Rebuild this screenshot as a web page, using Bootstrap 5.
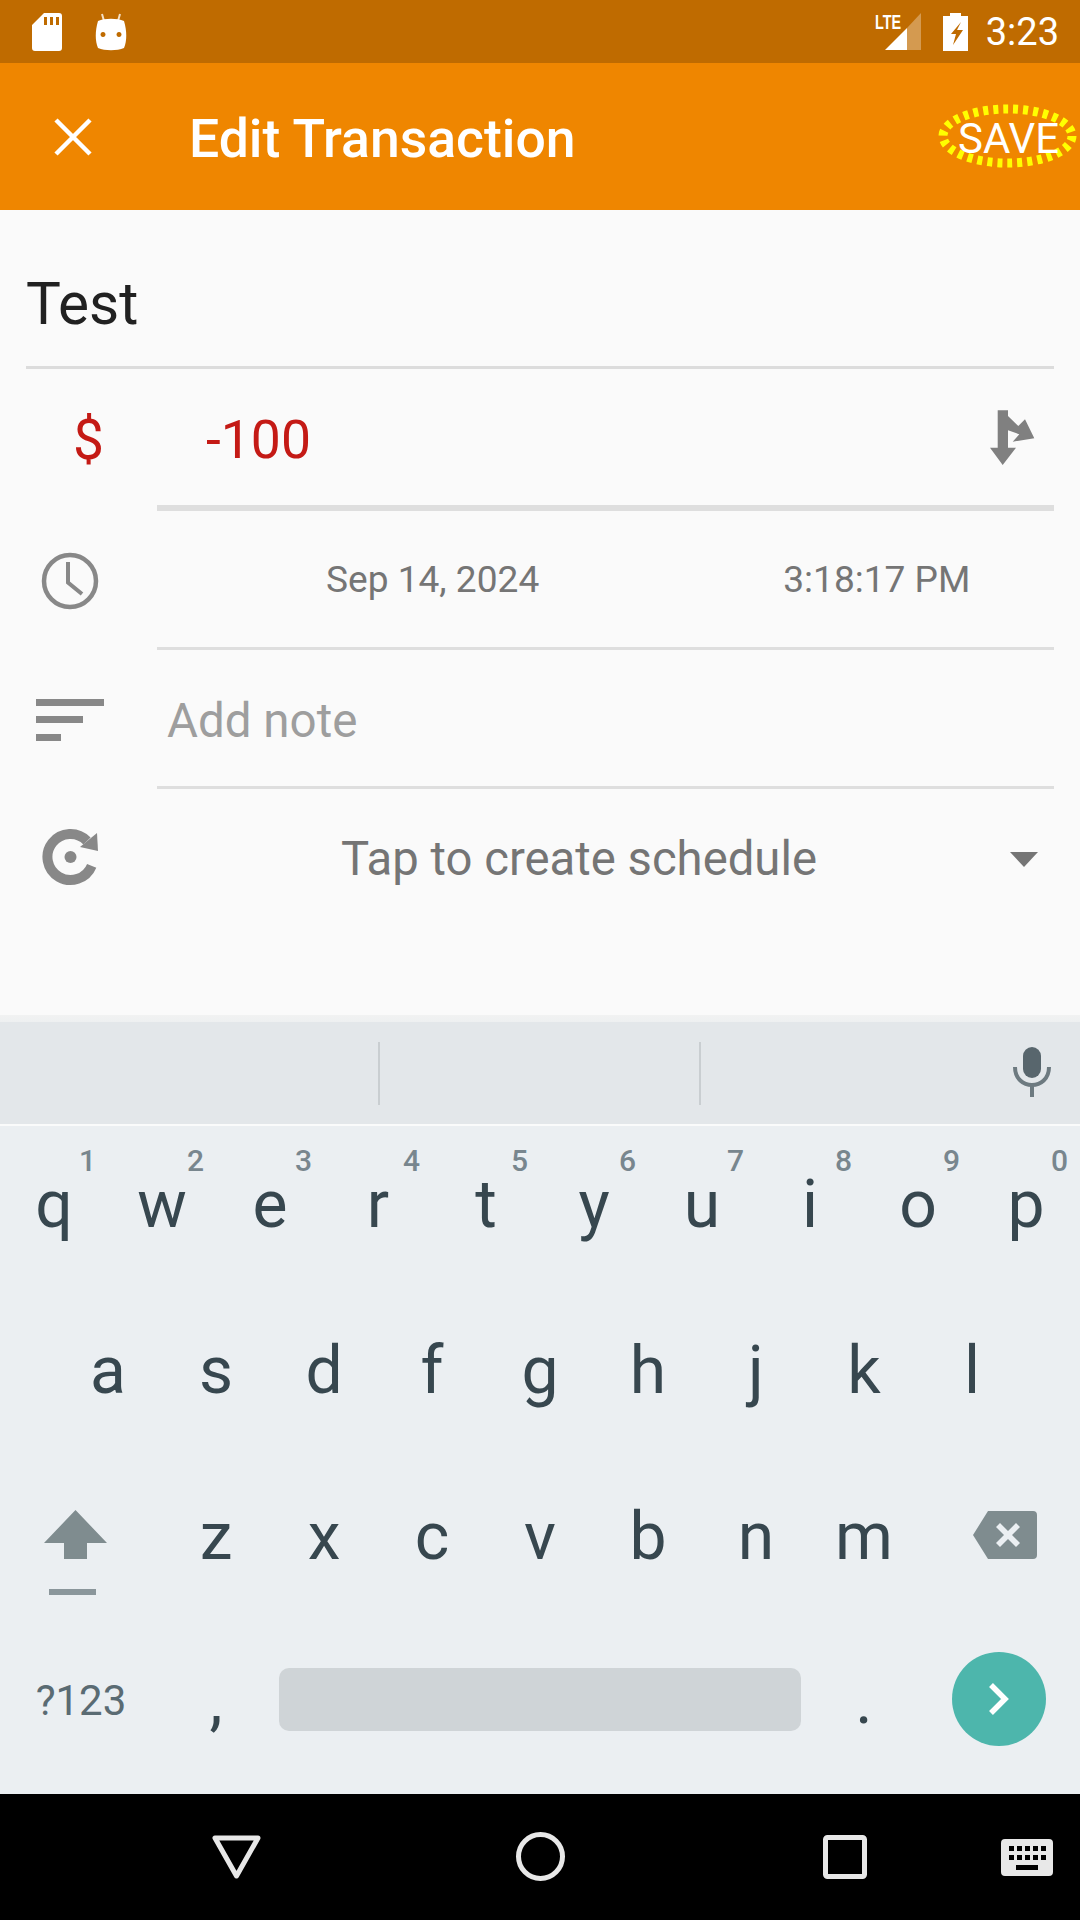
<!DOCTYPE html>
<html lang="en">
<head>
<meta charset="UTF-8">
<meta name="viewport" content="width=device-width, initial-scale=1.0">
<title>Edit Transaction</title>
<link href="https://cdn.jsdelivr.net/npm/bootstrap@5.3.0/dist/css/bootstrap.min.css" rel="stylesheet">
<style>
  body { font-family: Roboto, "Liberation Sans", sans-serif; background: #fafafa; overflow: hidden; }
  .screen { width: 1080px; height: 1920px; }
  .status-strip { height: 63px; background: #bf6b00; padding-left: 32px; padding-right: 21px; }
  .status-droid { margin-left: 33px; }
  .signal-box { position: relative; width: 46px; height: 38px; }
  .signal-lte { position: absolute; left: -1px; top: -1px; font-family: "Liberation Sans", sans-serif; font-size: 20px; font-weight: 700; line-height: 20px; color: #fff; transform: scaleX(.72); transform-origin: left; }
  .signal-bars { position: absolute; left: 9px; top: 0; }
  .status-batt { margin-left: 21px; }
  .status-time { font-size: 38px; color: #fff; line-height: 1; margin-left: 17px; }
  .app-bar { height: 147px; background: #ef8600; position: relative; color: #fff; }
  .close-btn { width: 190px; padding-left: 54px; }
  .app-title { font-size: 53.5px; font-weight: 500; line-height: 1; padding-top: 4px; margin-left: -1px; }
  .save-label { position: absolute; left: 958px; top: 55px; font-size: 42px; line-height: 1; }
  .save-ring { position: absolute; left: 936px; top: 39px; }
  .form-area { background: #fafafa; }
  .name-row { height: 159px; padding: 0 26px 0 27px; }
  .name-text { font-size: 58.5px; line-height: 1; color: #212121; height: 159px; padding-top: 65px; border-bottom: 3px solid #dcdcdc; margin-left: -1px; }
  .icon-cell { width: 157px; flex: none; }
  .clock-cell { padding-left: 41px; }
  .sort-cell { padding-left: 36px; }
  .repeat-cell { padding-left: 41px; padding-bottom: 6px; }
  .row-body { margin-right: 26px; border-bottom: 3px solid #dedede; }
  .amount-row { height: 142px; }
  .amount-body { border-bottom-width: 6px; padding-left: 49px; padding-right: 18px; }
  .amount-sign { font-size: 55px; color: #c41a15; padding-left: 73px; line-height: 1; }
  .amount-text { font-size: 53.5px; color: #c41a15; line-height: 1; padding-top: 5px; }
  .date-row, .note-row { height: 139px; }
  .date-text { font-size: 37.1px; color: #757575; line-height: 1; padding-top: 2px; }
  .date-day { margin-left: 169px; }
  .date-hour { margin-left: 244px; }
  .note-text { font-size: 47.5px; color: #9e9e9e; padding-left: 10px; line-height: 1; padding-top: 7px; }
  .sched-row { height: 141px; }
  .sched-text { font-size: 47.25px; color: #757575; line-height: 1; margin-left: 184px; }
  .drop-caret { width: 0; height: 0; border-left: 14px solid transparent; border-right: 14px solid transparent; border-top: 15px solid #757575; margin-left: 193px; }
  .form-rest { height: 85px; }
  .kb-shadow { height: 7px; background: linear-gradient(#f1f2f2, #eef0f1); }
  .suggest-strip { height: 102px; background: #e3e7ea; position: relative; }
  .suggest-sep { width: 2px; height: 63px; background: #c9ced1; }
  .sep-one { margin-left: 378px; }
  .sep-two { margin-left: 319px; }
  .suggest-mic { position: absolute; left: 1013px; top: 25px; }
  .kb-gap { height: 2px; background: #fafbfb; }
  .keyboard { height: 668px; background: #ebeff2; color: #37474f; }
  .key-line { height: 166px; }
  .key-bottom { height: 170px; padding-bottom: 20px; }
  .key-cell { width: 108px; flex: none; position: relative; height: 100%; font-size: 66px; line-height: 1; padding-bottom: 8px; }
  .key-bottom .key-cell { padding-top: 4px; padding-bottom: 0; }
  .key-hint { position: absolute; right: 12px; top: 20px; font-size: 30px; font-weight: 500; color: #78868e; line-height: 1; }
  .key-wide { width: 162px; flex: none; }
  .shift-key { padding-right: 12px; padding-top: 22px; }
  .back-key { padding-left: 11px; padding-bottom: 12px; }
  .sym-key { font-size: 42px; color: #5a6b73; line-height: 1; padding-top: 4px; }
  .space-key { width: 522px; height: 63px; background: #cfd4d7; border-radius: 10px; margin: 0 9px; }
  .enter-key { width: 94px; height: 94px; border-radius: 50%; background: #4db6ac; }
  .nav-strip { height: 126px; background: #000; position: relative; }
  .nav-icon { position: absolute; }
  .nav-back { left: 212px; top: 41px; }
  .nav-home { left: 516px; top: 38px; }
  .nav-recent { left: 823px; top: 41px; }
  .nav-keys { left: 1001px; top: 45px; }
</style>
</head>
<body>
<div class="screen d-flex flex-column">

  <!-- status bar -->
  <div class="status-strip d-flex align-items-center flex-shrink-0">
    <svg width="30" height="38" viewBox="0 0 30 38"><path fill="#fff" fill-rule="evenodd" d="M12 0H27a3 3 0 0 1 3 3V35a3 3 0 0 1-3 3H3a3 3 0 0 1-3-3V12ZM12 4V12H15V4ZM18 4V12H21V4ZM24 4V12H27V4Z"/></svg>
    <svg class="status-droid" width="32" height="38" viewBox="0 0 32 38">
      <path stroke="#f3dfc4" stroke-width="2" d="M7 1l2 7M25 1l-2 7"/>
      <path fill="#fff" fill-rule="evenodd" d="M3 8C10 5 22 5 29 8C32 18 32 28 29 35C22 38 10 38 3 35C0 28 0 18 3 8ZM8 19a2.500 2.500 0 1 0 .01 0ZM24 19a2.500 2.500 0 1 0 .01 0Z"/>
    </svg>
    <div class="flex-grow-1"></div>
    <div class="signal-box">
      <svg class="signal-bars" width="37" height="37" viewBox="0 0 37 37"><path fill="#d49a50" d="M36 0V37H22V15Z"/><path fill="#fff" d="M22 15V37H0Z"/></svg>
      <span class="signal-lte">LTE</span>
    </div>
    <svg class="status-batt" width="26" height="38" viewBox="0 0 26 38"><path fill="#fff" fill-rule="evenodd" d="M7 0H18V3H25V38H0V3H7ZM18 9L8 21H13L10 32L20 17H14Z"/></svg>
    <span class="status-time">3:23</span>
  </div>

  <!-- toolbar -->
  <div class="app-bar d-flex align-items-center flex-shrink-0">
    <div class="close-btn d-flex align-items-center">
      <svg width="38" height="38" viewBox="0 0 38 38"><path stroke="#fff" stroke-width="4.5" d="M2 2L36 36M36 2L2 36"/></svg>
    </div>
    <span class="app-title">Edit Transaction</span>
    <svg class="save-ring" width="144" height="68" viewBox="0 0 144 68"><ellipse cx="71.500" cy="34" rx="64.500" ry="27" fill="none" stroke="#ff0" stroke-width="9" stroke-dasharray="5 5"/></svg>
    <span class="save-label">SAVE</span>
  </div>

  <!-- form -->
  <div class="form-area flex-shrink-0">
    <div class="name-row"><div class="name-text">Test</div></div>

    <div class="amount-row d-flex">
      <div class="icon-cell d-flex align-items-center"><span class="amount-sign">$</span></div>
      <div class="row-body amount-body flex-grow-1 d-flex align-items-center justify-content-between">
        <span class="amount-text">-100</span>
        <svg width="48" height="60" viewBox="988 406 48 60"><path fill="#808080" d="M997.700 409.300H1008V415L1018.300 425 1025 418.300 1034.300 437.300 1012.700 440.700 1019.300 433.300 1008 429.300V446.700H1016L1002.700 464 990 446.700H997.700Z"/></svg>
      </div>
    </div>

    <div class="date-row d-flex">
      <div class="icon-cell clock-cell d-flex align-items-center">
        <svg width="58" height="58" viewBox="0 0 58 58"><circle cx="29" cy="29" r="26" fill="none" stroke="#888" stroke-width="4.500"/><path fill="none" stroke="#888" stroke-width="4" d="M27 10V30.500L41 42"/></svg>
      </div>
      <div class="row-body flex-grow-1 d-flex align-items-center">
        <span class="date-text date-day">Sep 14, 2024</span>
        <span class="date-text date-hour">3:18:17 PM</span>
      </div>
    </div>

    <div class="note-row d-flex">
      <div class="icon-cell sort-cell d-flex align-items-center">
        <svg width="68" height="42" viewBox="0 0 68 42"><path fill="#888" d="M0 0H68V7H0ZM0 17H47V24H0ZM0 35H25V42H0Z"/></svg>
      </div>
      <div class="row-body flex-grow-1 d-flex align-items-center"><span class="note-text">Add note</span></div>
    </div>

    <div class="sched-row d-flex">
      <div class="icon-cell repeat-cell d-flex align-items-center">
        <svg width="58" height="58" viewBox="0 0 58 58"><path fill="none" stroke="#888" stroke-width="10" d="M50.700 37.800A23 23 0 1 1 46 13"/><path fill="#888" d="M56 5L57 23 39 19Z"/><circle cx="29.500" cy="29" r="6" fill="#888"/></svg>
      </div>
      <div class="flex-grow-1 d-flex align-items-center"><span class="sched-text">Tap to create schedule</span><span class="drop-caret"></span></div>
    </div>

    <div class="form-rest"></div>
  </div>

  <!-- keyboard -->
  <div class="kb-shadow flex-shrink-0"></div>
  <div class="suggest-strip d-flex align-items-center flex-shrink-0">
    <span class="suggest-sep sep-one"></span>
    <span class="suggest-sep sep-two"></span>
    <svg class="suggest-mic" width="38" height="50" viewBox="0 0 38 50"><rect x="10" y="0" width="18" height="31" rx="9" fill="#58666d"/><path fill="none" stroke="#6d7a80" stroke-width="4" d="M2 20C2 44 36 44 36 20"/><path stroke="#6d7a80" stroke-width="4" d="M19 36V50"/></svg>
  </div>
  <div class="kb-gap flex-shrink-0"></div>

  <div class="keyboard flex-shrink-0">
    <div class="key-line d-flex" id="rowOne"></div>
    <div class="key-line d-flex justify-content-center" id="rowTwo"></div>
    <div class="key-line d-flex align-items-center">
      <div class="key-wide shift-key d-flex justify-content-center">
        <svg width="63" height="85" viewBox="0 0 63 85"><path fill="#7f8c8f" d="M31.500 0L63 33H43V49H20V33H0Z"/><path fill="#8a969b" d="M5 79H52V85H5Z"/></svg>
      </div>
      <div class="d-flex h-100" id="rowThree"></div>
      <div class="key-wide back-key d-flex justify-content-center">
        <svg width="64" height="48" viewBox="0 0 64 48"><path fill="#7f8c8f" fill-rule="evenodd" d="M15 0H60a4 4 0 0 1 4 4V44a4 4 0 0 1-4 4H15L0 24ZM27 12L23 16 31 24 23 32 27 36 35 28 43 36 47 32 39 24 47 16 43 12 35 20Z"/></svg>
      </div>
    </div>
    <div class="key-line key-bottom d-flex align-items-center">
      <div class="key-wide d-flex justify-content-center"><span class="sym-key">?123</span></div>
      <div class="key-cell d-flex justify-content-center align-items-center"><span>,</span></div>
      <div class="space-key"></div>
      <div class="key-cell d-flex justify-content-center align-items-center"><span>.</span></div>
      <div class="key-wide d-flex justify-content-center align-items-center">
        <div class="enter-key d-flex justify-content-center align-items-center">
          <svg width="22" height="34" viewBox="0 0 22 34"><path fill="none" stroke="#fff" stroke-width="5.500" d="M3 3L17 17 3 31"/></svg>
        </div>
      </div>
    </div>
  </div>

  <!-- nav bar -->
  <div class="nav-strip flex-shrink-0">
    <svg class="nav-icon nav-back" width="49" height="44" viewBox="0 0 49 44"><path fill="none" stroke="#e8e8e8" stroke-width="5" stroke-linejoin="round" d="M3 3H46L24.500 41Z"/></svg>
    <svg class="nav-icon nav-home" width="49" height="49" viewBox="0 0 49 49"><circle cx="24.500" cy="24.500" r="22" fill="none" stroke="#e8e8e8" stroke-width="5"/></svg>
    <svg class="nav-icon nav-recent" width="44" height="44" viewBox="0 0 44 44"><rect x="2.500" y="2.500" width="39" height="39" rx="2" fill="none" stroke="#e8e8e8" stroke-width="5"/></svg>
    <svg class="nav-icon nav-keys" width="52" height="37" viewBox="0 0 52 37"><path fill="#e8e8e8" fill-rule="evenodd" d="M4 0H48a4 4 0 0 1 4 4V33a4 4 0 0 1-4 4H4a4 4 0 0 1-4-4V4a4 4 0 0 1 4-4ZM8 7V12H13V7ZM16 7V12H21V7ZM24 7V12H29V7ZM32 7V12H37V7ZM40 7V12H45V7ZM8 16V21H13V16ZM16 16V21H21V16ZM24 16V21H29V16ZM32 16V21H37V16ZM40 16V21H45V16ZM15 26V31H37V26Z"/></svg>
  </div>
</div>

<script>
  // letter rows are generated, the three rows only differ by their letters
  function fillRow(id, letters, hints) {
    let row = document.getElementById(id);
    letters.split("").forEach((ch, i) => {
      let hint = hints ? `<span class="key-hint">${hints[i]}</span>` : "";
      row.innerHTML += `<div class="key-cell d-flex justify-content-center align-items-center"><span>${ch}</span>${hint}</div>`;
    });
  }
  fillRow("rowOne", "qwertyuiop", "1234567890");
  fillRow("rowTwo", "asdfghjkl");
  fillRow("rowThree", "zxcvbnm");
</script>
<script src="https://cdn.jsdelivr.net/npm/bootstrap@5.3.0/dist/js/bootstrap.bundle.min.js"></script>
</body>
</html>
